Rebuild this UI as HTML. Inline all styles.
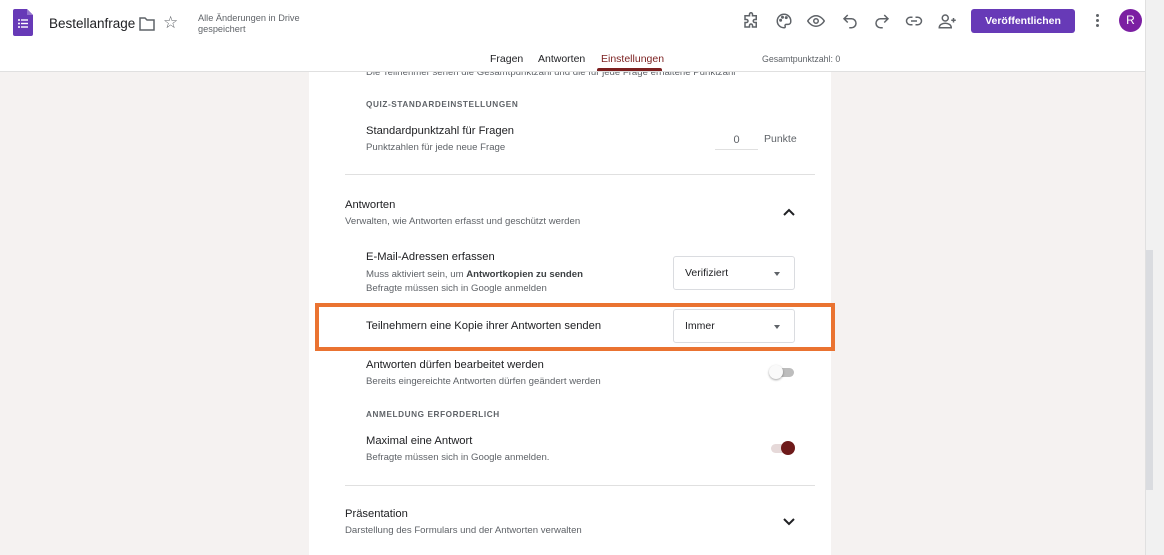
<!DOCTYPE html>
<html><head><meta charset="utf-8"><style>
*{box-sizing:border-box;margin:0;padding:0}
body{width:1164px;height:555px;overflow:hidden;background:#f5f2f1;font-family:"Liberation Sans",Arial,sans-serif;color:#202124;position:relative}
.hdr{position:absolute;left:0;top:0;width:1145px;height:72px;background:#fff;border-bottom:1px solid #e0e0e0;z-index:5}
.abs{position:absolute}
.card{position:absolute;left:309px;top:72px;width:522px;height:483px;background:#fff}
.t{font-size:11.2px;color:#202124}
.s{font-size:9.6px;color:#5f6368}
.cap{font-size:8.2px;color:#5f6368;letter-spacing:.6px;font-weight:bold}
.hr{position:absolute;left:36px;width:470px;height:1px;background:#e0e0e0}
.sel{position:absolute;left:364px;width:122px;height:34px;border:1px solid #dadce0;border-radius:3px;font-size:10.5px;padding:10px 0 0 11px}
.sel:after{content:"";position:absolute;right:14px;top:15px;border:3.5px solid transparent;border-top:4px solid #5f6368}
.ico{position:absolute;top:12px}
</style></head><body>
<div class="hdr">
 <svg class="abs" style="left:13px;top:9px" width="20" height="27" viewBox="0 0 20 27"><path d="M2 0h12l6 6v19a2 2 0 0 1-2 2H2a2 2 0 0 1-2-2V2a2 2 0 0 1 2-2z" fill="#673ab7"/><path d="M14 0v6h6z" fill="#9575cd"/><g fill="#fff"><circle cx="6" cy="11" r="1"/><circle cx="6" cy="14.5" r="1"/><circle cx="6" cy="18" r="1"/><rect x="8" y="10.3" width="7" height="1.4"/><rect x="8" y="13.8" width="7" height="1.4"/><rect x="8" y="17.3" width="7" height="1.4"/></g></svg>
 <div class="abs" style="left:49px;top:16px;font-size:13.5px">Bestellanfrage</div>
 <svg class="abs" style="left:139px;top:17px" width="16" height="14" viewBox="0 0 16 14"><path d="M1 1h5l2 2h7v10H1z" fill="none" stroke="#5f6368" stroke-width="1.5"/></svg>
 <div class="abs" style="left:163px;top:13px;font-size:17px;color:#5f6368">☆</div>
 <div class="abs s" style="left:198px;top:13px;font-size:9.2px;line-height:11px">Alle Änderungen in Drive<br>gespeichert</div>
 <svg class="ico" style="left:742px" width="18" height="18" viewBox="0 0 24 24" fill="none" stroke="#5f6368" stroke-width="2"><path d="M10 3a2 2 0 0 1 4 0v2h5v5h-2a2 2 0 0 0 0 4h2v6h-5v-2a2 2 0 0 0-4 0v2H4v-6h2a2 2 0 0 0 0-4H4V5h6z"/></svg>
 <svg class="ico" style="left:775px" width="18" height="18" viewBox="0 0 24 24" fill="none" stroke="#5f6368" stroke-width="2"><path d="M12 3a9 9 0 0 0 0 18c1.5 0 2-1 1.5-2s0-2.5 1.5-2.5h2.5A3.5 3.5 0 0 0 21 13 9 9 0 0 0 12 3z"/><circle cx="7.5" cy="11" r="1" fill="#5f6368"/><circle cx="10" cy="7" r="1" fill="#5f6368"/><circle cx="15" cy="7.5" r="1" fill="#5f6368"/></svg>
 <svg class="ico" style="left:807px" width="18" height="18" viewBox="0 0 24 24" fill="none" stroke="#5f6368" stroke-width="2"><path d="M1 12s4-7 11-7 11 7 11 7-4 7-11 7S1 12 1 12z"/><circle cx="12" cy="12" r="3"/></svg>
 <svg class="ico" style="left:841px" width="18" height="18" viewBox="0 0 24 24" fill="none" stroke="#5f6368" stroke-width="2"><path d="M9 14L4 9l5-5"/><path d="M4 9h10a6 6 0 0 1 0 12h-3"/></svg>
 <svg class="ico" style="left:873px" width="18" height="18" viewBox="0 0 24 24" fill="none" stroke="#5f6368" stroke-width="2"><path d="M15 14l5-5-5-5"/><path d="M20 9H10a6 6 0 0 0 0 12h3"/></svg>
 <svg class="ico" style="left:905px" width="18" height="18" viewBox="0 0 24 24" fill="none" stroke="#5f6368" stroke-width="2"><path d="M10 7H7a5 5 0 0 0 0 10h3M14 7h3a5 5 0 0 1 0 10h-3M8 12h8"/></svg>
 <svg class="ico" style="left:938px" width="19" height="18" viewBox="0 0 24 24" fill="none" stroke="#5f6368" stroke-width="2"><circle cx="9" cy="8" r="4"/><path d="M1 21c0-4 4-6 8-6s8 2 8 6zM20 8v6M17 11h6"/></svg>
 <div class="abs" style="left:971px;top:9px;width:104px;height:24px;background:#673ab7;border-radius:3px;color:#fff;font-size:10.5px;font-weight:bold;text-align:center;line-height:24px">Veröffentlichen</div>
 <div class="abs" style="left:1096px;top:14px;width:3px;"><div style="width:3px;height:3px;background:#5f6368;border-radius:50%;margin-bottom:2px"></div><div style="width:3px;height:3px;background:#5f6368;border-radius:50%;margin-bottom:2px"></div><div style="width:3px;height:3px;background:#5f6368;border-radius:50%"></div></div>
 <div class="abs" style="left:1119px;top:9px;width:23px;height:23px;border-radius:50%;background:#7b1fa2;color:#fff;font-size:12px;text-align:center;line-height:23px">R</div>
 <div class="abs" style="left:490px;top:53px;font-size:10.5px">Fragen</div>
 <div class="abs" style="left:538px;top:53px;font-size:10.5px">Antworten</div>
 <div class="abs" style="left:601px;top:53px;font-size:10.5px;color:#7b1f1f">Einstellungen</div>
 <div class="abs" style="left:597px;top:68px;width:65px;height:3px;background:#7b1f1f;border-radius:2px 2px 0 0"></div>
 <div class="abs s" style="left:762px;top:54px;font-size:8.8px">Gesamtpunktzahl: 0</div>
</div>
<div class="card">
 <div class="abs s" style="left:57px;top:-5px">Die Teilnehmer sehen die Gesamtpunktzahl und die für jede Frage erhaltene Punktzahl</div>
 <div class="abs cap" style="left:57px;top:28px">QUIZ-STANDARDEINSTELLUNGEN</div>
 <div class="abs t" style="left:57px;top:53px">Standardpunktzahl für Fragen</div>
 <div class="abs s" style="left:57px;top:70px">Punktzahlen für jede neue Frage</div>
 <div class="abs" style="left:406px;top:62px;width:43px;height:16px;border-bottom:1px solid #e0e0e0;font-size:11px;color:#5f6368;text-align:center">0</div>
 <div class="abs" style="left:455px;top:61px;font-size:10.5px;color:#5f6368">Punkte</div>
 <div class="hr" style="top:102px"></div>
 <div class="abs t" style="left:36px;top:127px">Antworten</div>
 <div class="abs s" style="left:36px;top:144px">Verwalten, wie Antworten erfasst und geschützt werden</div>
 <svg class="abs" style="left:474px;top:136px" width="12" height="8" viewBox="0 0 12 8"><path d="M1 7l5-5 5 5" fill="none" stroke="#202124" stroke-width="2"/></svg>
 <div class="abs t" style="left:57px;top:179px">E-Mail-Adressen erfassen</div>
 <div class="abs s" style="left:57px;top:197px">Muss aktiviert sein, um <b style="color:#3c4043">Antwortkopien zu senden</b></div>
 <div class="abs s" style="left:57px;top:211px">Befragte müssen sich in Google anmelden</div>
 <div class="sel" style="top:184px">Verifiziert</div>
 <div class="abs t" style="left:57px;top:248px">Teilnehmern eine Kopie ihrer Antworten senden</div>
 <div class="sel" style="top:237px">Immer</div>
 <div class="abs t" style="left:57px;top:287px">Antworten dürfen bearbeitet werden</div>
 <div class="abs s" style="left:57px;top:304px">Bereits eingereichte Antworten dürfen geändert werden</div>
 <div class="abs" style="left:462px;top:296px;width:23px;height:9px;border-radius:5px;background:#bdbdbd"></div>
 <div class="abs" style="left:460px;top:293px;width:14px;height:14px;border-radius:50%;background:#fafafa;box-shadow:0 1px 2px rgba(0,0,0,.35)"></div>
 <div class="abs cap" style="left:57px;top:338px">ANMELDUNG ERFORDERLICH</div>
 <div class="abs t" style="left:57px;top:363px">Maximal eine Antwort</div>
 <div class="abs s" style="left:57px;top:380px">Befragte müssen sich in Google anmelden.</div>
 <div class="abs" style="left:462px;top:372px;width:23px;height:9px;border-radius:5px;background:#e6d9d9"></div>
 <div class="abs" style="left:472px;top:369px;width:14px;height:14px;border-radius:50%;background:#6e1a1a"></div>
 <div class="hr" style="top:413px"></div>
 <div class="abs t" style="left:36px;top:436px">Präsentation</div>
 <div class="abs s" style="left:36px;top:453px">Darstellung des Formulars und der Antworten verwalten</div>
 <svg class="abs" style="left:474px;top:446px" width="12" height="8" viewBox="0 0 12 8"><path d="M1 1l5 5 5-5" fill="none" stroke="#202124" stroke-width="2"/></svg>
</div>
<div class="abs" style="left:315px;top:303px;width:520px;height:48px;border:4px solid #ea7331"></div>
<div class="abs" style="left:1145px;top:0;width:19px;height:555px;background:#f1f1f1;border-left:1px solid #e0e0e0;z-index:6"></div>
<div class="abs" style="left:1146px;top:250px;width:7px;height:240px;background:#dadce0;z-index:7"></div>
</body></html>
